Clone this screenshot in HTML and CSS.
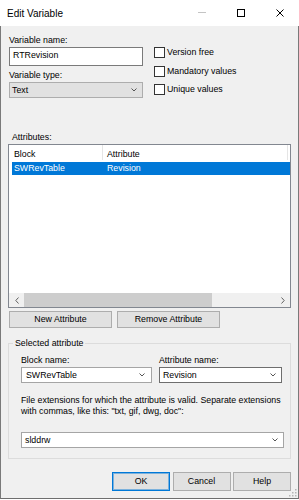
FILE: index.html
```html
<!DOCTYPE html>
<html>
<head>
<meta charset="utf-8">
<title>Edit Variable</title>
<link rel="stylesheet" href="styles.css">
</head>
<body>
<div class="window">
  <div class="titlebar">
    <div class="title">Edit Variable</div>
    <div class="caption-btns">
      <div class="cap-btn"><svg width="10" height="10" viewBox="0 0 10 10"><line x1="1" y1="4.5" x2="9" y2="4.5" stroke="#c4c4c4" stroke-width="1"/></svg></div>
      <div class="cap-btn"><svg width="10" height="10" viewBox="0 0 10 10"><rect x="1.5" y="1.5" width="7" height="7" fill="none" stroke="#000" stroke-width="1"/></svg></div>
      <div class="cap-btn"><svg width="10" height="10" viewBox="0 0 10 10"><path d="M1.5 1.5L8.5 8.5M8.5 1.5L1.5 8.5" stroke="#000" stroke-width="1"/></svg></div>
    </div>
  </div>
  <div class="client">
    <div class="top">
      <div class="left-col">
        <div class="label">Variable name:</div>
        <div class="textbox">RTRevision</div>
        <div class="label label-gap">Variable type:</div>
        <div class="combo-ro"><span>Text</span><svg class="chev" width="6" height="4" viewBox="0 0 6 4"><polyline points="0.5,0.5 3,3 5.5,0.5" fill="none" stroke="#555" stroke-width="1"/></svg></div>
      </div>
      <div class="checks">
        <div class="check"><span class="box"></span>Version free</div>
        <div class="check"><span class="box"></span>Mandatory values</div>
        <div class="check"><span class="box"></span>Unique values</div>
      </div>
    </div>

    <div class="attr-label">Attributes:</div>
    <div class="listview">
      <div class="lv-header">
        <div class="hcol1">Block</div>
        <div class="hcol2">Attribute</div>
      </div>
      <div class="lv-body">
        <div class="lv-row selected">
          <div class="rcol1">SWRevTable</div>
          <div class="rcol2">Revision</div>
        </div>
      </div>
      <div class="hscroll">
        <div class="sb-arrow"><svg width="4" height="7" viewBox="0 0 4 7"><polyline points="3.5,0.5 0.8,3.5 3.5,6.5" fill="none" stroke="#606060" stroke-width="1"/></svg></div>
        <div class="sb-thumb"></div>
        <div class="sb-track"></div>
        <div class="sb-arrow"><svg width="4" height="7" viewBox="0 0 4 7"><polyline points="0.5,0.5 3.2,3.5 0.5,6.5" fill="none" stroke="#606060" stroke-width="1"/></svg></div>
      </div>
    </div>

    <div class="btnrow">
      <div class="btn">New Attribute</div>
      <div class="btn">Remove Attribute</div>
    </div>

    <fieldset class="group">
      <legend>Selected attribute</legend>
      <div class="grp-grid">
        <div class="gcol1">
          <div class="label">Block name:</div>
          <div class="combo combo-block"><span>SWRevTable</span><svg class="chev" width="6" height="4" viewBox="0 0 6 4"><polyline points="0.5,0.5 3,3 5.5,0.5" fill="none" stroke="#555" stroke-width="1"/></svg></div>
        </div>
        <div class="gcol2">
          <div class="label">Attribute name:</div>
          <div class="combo combo-attr"><span>Revision</span><svg class="chev" width="6" height="4" viewBox="0 0 6 4"><polyline points="0.5,0.5 3,3 5.5,0.5" fill="none" stroke="#555" stroke-width="1"/></svg></div>
        </div>
      </div>
      <div class="desc">
        <span class="line">File extensions for which the attribute is valid. Separate extensions</span>
        <span class="line">with commas, like this: "txt, gif, dwg, doc":</span>
      </div>
      <div class="combo combo-wide"><span>slddrw</span><svg class="chev" width="6" height="4" viewBox="0 0 6 4"><polyline points="0.5,0.5 3,3 5.5,0.5" fill="none" stroke="#555" stroke-width="1"/></svg></div>
    </fieldset>

    <div class="footer">
      <div class="fbtn default">OK</div>
      <div class="fbtn">Cancel</div>
      <div class="fbtn">Help</div>
    </div>

    <svg class="grip" width="8" height="8" viewBox="0 0 8 8">
      <rect x="6" y="0" width="1.5" height="1.5" fill="#b5b5b5"/>
      <rect x="3" y="3" width="1.5" height="1.5" fill="#b5b5b5"/>
      <rect x="6" y="3" width="1.5" height="1.5" fill="#b5b5b5"/>
      <rect x="0" y="6" width="1.5" height="1.5" fill="#b5b5b5"/>
      <rect x="3" y="6" width="1.5" height="1.5" fill="#b5b5b5"/>
      <rect x="6" y="6" width="1.5" height="1.5" fill="#b5b5b5"/>
    </svg>
  </div>
</div>
</body>
</html>
```

FILE: styles.css
```css
* {
  box-sizing: border-box;
}

html, body {
  margin: 0;
  padding: 0;
  background: #ffffff;
}

body {
  font-family: "Liberation Sans", Arial, sans-serif;
  font-size: 8.8px;
  color: #000;
}

.window {
  width: 299px;
  height: 499px;
  display: flex;
  flex-direction: column;
}

/* Title bar */
.titlebar {
  height: 26px;
  flex: 0 0 26px;
  background: #fff;
  display: flex;
  align-items: center;
  padding-left: 7px;
}

.title {
  flex: 1;
  font-size: 10px;
  padding-top: 1px;
}

.caption-btns {
  display: flex;
  height: 26px;
}

.cap-btn {
  width: 39px;
  height: 26px;
  display: flex;
  align-items: center;
  justify-content: center;
}

/* Client area */
.client {
  flex: 1;
  position: relative;
  background: #f0f0f0;
  border-left: 1px solid #7a7a7a;
  border-right: 1px solid #7a7a7a;
  border-bottom: 1px solid #6e6e6e;
  padding: 9px 7px 0 7px;
  display: flex;
  flex-direction: column;
  align-items: flex-start;
}

.label {
  line-height: 11px;
  height: 11px;
  white-space: nowrap;
}

.top {
  display: flex;
  margin-left: 1px;
}

.left-col {
  width: 134px;
  display: flex;
  flex-direction: column;
}

.textbox {
  margin-top: 1px;
  height: 19px;
  border: 1px solid #7a7a7a;
  background: #fff;
  padding-left: 3px;
  line-height: 14px;
}

.label-gap {
  margin-top: 4px;
}

.combo-ro {
  margin-top: 1px;
  height: 16px;
  background: #e1e1e1;
  border: 1px solid #adadad;
  display: flex;
  align-items: center;
  justify-content: space-between;
  padding: 0 5px 0 2px;
  line-height: 11px;
}

.chev {
  display: block;
  flex: 0 0 auto;
}

.checks {
  margin-left: 11px;
  padding-top: 12px;
  display: flex;
  flex-direction: column;
  gap: 7.5px;
}

.check {
  display: flex;
  align-items: center;
  height: 11px;
  white-space: nowrap;
  line-height: 11px;
}

.box {
  width: 11px;
  height: 11px;
  border: 1px solid #333;
  background: #fff;
  margin-right: 2px;
  flex: 0 0 auto;
}

/* Attributes list */
.attr-label {
  margin-top: 34px;
  margin-left: 4px;
  line-height: 11px;
}

.listview {
  margin-top: 1px;
  width: 283px;
  height: 164px;
  border: 1px solid #828790;
  background: #fff;
  display: flex;
  flex-direction: column;
}

.lv-header {
  height: 15px;
  flex: 0 0 15px;
  display: flex;
  line-height: 11px;
}

.hcol1 {
  width: 94px;
  padding: 3.5px 0 0 5px;
  border-right: 1px solid #e5e5e5;
}

.hcol2 {
  width: 185px;
  padding: 3.5px 0 0 4px;
  border-right: 1px solid #e5e5e5;
}

.lv-body {
  flex: 1;
  padding: 2px 0 0 3px;
}

.lv-row {
  height: 13px;
  display: flex;
  line-height: 13px;
  white-space: nowrap;
}

.lv-row.selected {
  background: #0078d7;
  color: #fff;
}

.rcol1 {
  width: 93px;
  padding-left: 2px;
}

.rcol2 {
  padding-left: 2px;
}

.hscroll {
  height: 14px;
  flex: 0 0 14px;
  display: flex;
  background: #f0f0f0;
}

.sb-arrow {
  width: 15px;
  display: flex;
  align-items: center;
  justify-content: center;
}

.sb-thumb {
  width: 188px;
  background: #cdcdcd;
}

.sb-track {
  flex: 1;
}

/* Buttons */
.btnrow {
  margin-top: 3px;
  margin-left: 1px;
  display: flex;
  gap: 5px;
}

.btn {
  width: 103px;
  height: 17px;
  background: #e1e1e1;
  border: 1px solid #adadad;
  display: flex;
  align-items: center;
  justify-content: center;
  line-height: 11px;
  white-space: nowrap;
}

/* Group box */
.group {
  margin: 10px 0 0 0;
  width: 283px;
  min-width: 0;
  border: 1px solid #dcdcdc;
  padding: 6px 6px 10px 12px;
}

.group legend {
  padding: 0 2px;
  margin-left: -8px;
  line-height: 11px;
}

.grp-grid {
  display: flex;
  gap: 7px;
}

.gcol1 {
  width: 131px;
}

.gcol2 {
  width: 123px;
}

.combo {
  margin-top: 1px;
  height: 16px;
  border: 1px solid #8a8a8a;
  background: #fff;
  display: flex;
  align-items: center;
  justify-content: space-between;
  padding: 0 5px 0 3px;
  line-height: 11px;
  white-space: nowrap;
}

.combo-block {
  padding: 0 6px 0 4px;
  border-color: #a5a5a5;
}

.combo-attr {
  border-color: #6e6e6e;
}

.desc {
  margin-top: 12px;
  line-height: 11px;
}

.desc .line {
  display: block;
  white-space: nowrap;
}

.combo-wide {
  margin-top: 15px;
  width: 263px;
  border-color: #a5a5a5;
}

/* Footer */
.footer {
  margin-top: 13px;
  align-self: stretch;
  display: flex;
  justify-content: flex-end;
  gap: 2.5px;
}

.fbtn {
  width: 58px;
  height: 19px;
  background: #e1e1e1;
  border: 1px solid #adadad;
  display: flex;
  align-items: center;
  justify-content: center;
  line-height: 11px;
}

.fbtn.default {
  border-color: #0078d7;
  box-shadow: inset 0 0 0 1px rgba(0, 120, 215, 0.45);
}

.grip {
  position: absolute;
  right: 1px;
  bottom: 1px;
}
```
